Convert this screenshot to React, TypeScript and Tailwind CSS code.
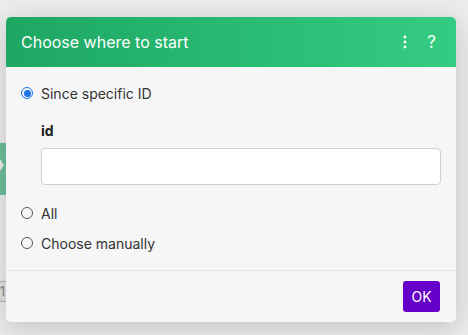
export default function App() {
  return (
    <div
      className="relative w-[468px] h-[335px] overflow-hidden bg-[#ececec]"
      style={{ fontFamily: "Inter, 'Noto Sans', sans-serif" }}
    >
      {/* canvas bits behind the dialog */}
      <div className="absolute left-0 top-[143px] w-[10px] h-[52px]">
        <svg width="10" height="52" viewBox="0 0 10 52">
          <path d="M0 0 H10 V52 H0 V28 L4 22 L0 16 Z" fill="#6dbf9a" />
        </svg>
      </div>
      <div className="absolute left-[-20px] top-[281px] w-[30px] h-[21px] border border-[#b8b8b8] bg-[#e2e2e2] text-[#888] text-[13px] leading-[19px] text-right pr-[4px]">
        1
      </div>

      {/* dialog */}
      <div className="absolute left-[6px] top-[17px] w-[450px] h-[305px] rounded-[5px] bg-[#f6f6f6] shadow-[0_6px_28px_rgba(0,0,0,0.18)] flex flex-col overflow-hidden">
        <div className="h-[50px] shrink-0 flex items-center justify-between pl-[15px] pr-[20px] bg-gradient-to-r from-[#1da762] to-[#34cc82]">
          <span className="text-white text-[16px]">Choose where to start</span>
          <div className="flex items-center gap-[20px] text-white">
            <svg width="4" height="14" viewBox="0 0 4 14">
              <circle cx="2" cy="2" r="1.4" fill="#fff" />
              <circle cx="2" cy="7" r="1.4" fill="#fff" />
              <circle cx="2" cy="12" r="1.4" fill="#fff" />
            </svg>
            <span className="text-[17px] leading-none">?</span>
          </div>
        </div>

        <div className="flex-1 pl-[15px] pr-[15px] pt-[17px]">
          <label className="flex items-center gap-[8px] h-[18px] text-[14px] text-[#333]">
            <span className="w-[12px] h-[12px] rounded-full border-[1.5px] border-[#1a73e8] flex items-center justify-center">
              <span className="w-[7px] h-[7px] rounded-full bg-[#1a73e8]" />
            </span>
            Since specific ID
          </label>

          <div className="pl-[20px] pt-[20px]">
            <div className="text-[14px] font-bold text-[#222] leading-[18px]">id</div>
            <div className="mt-[8px] h-[37px] w-[400px] rounded-[4px] border border-[#d0d0d0] bg-white" />
          </div>

          <label className="mt-[19px] flex items-center gap-[8px] h-[18px] text-[14px] text-[#333]">
            <span className="w-[12px] h-[12px] rounded-full border border-[#555]" />
            All
          </label>
          <label className="mt-[12px] flex items-center gap-[8px] h-[18px] text-[14px] text-[#333]">
            <span className="w-[12px] h-[12px] rounded-full border border-[#555]" />
            Choose manually
          </label>
        </div>

        <div className="h-[52px] shrink-0 border-t border-[#e4e4e4] flex items-center justify-end pr-[16px]">
          <button className="w-[37px] h-[31px] rounded-[3px] bg-[#6600c8] text-white text-[14px]">
            OK
          </button>
        </div>
      </div>
    </div>
  );
}
